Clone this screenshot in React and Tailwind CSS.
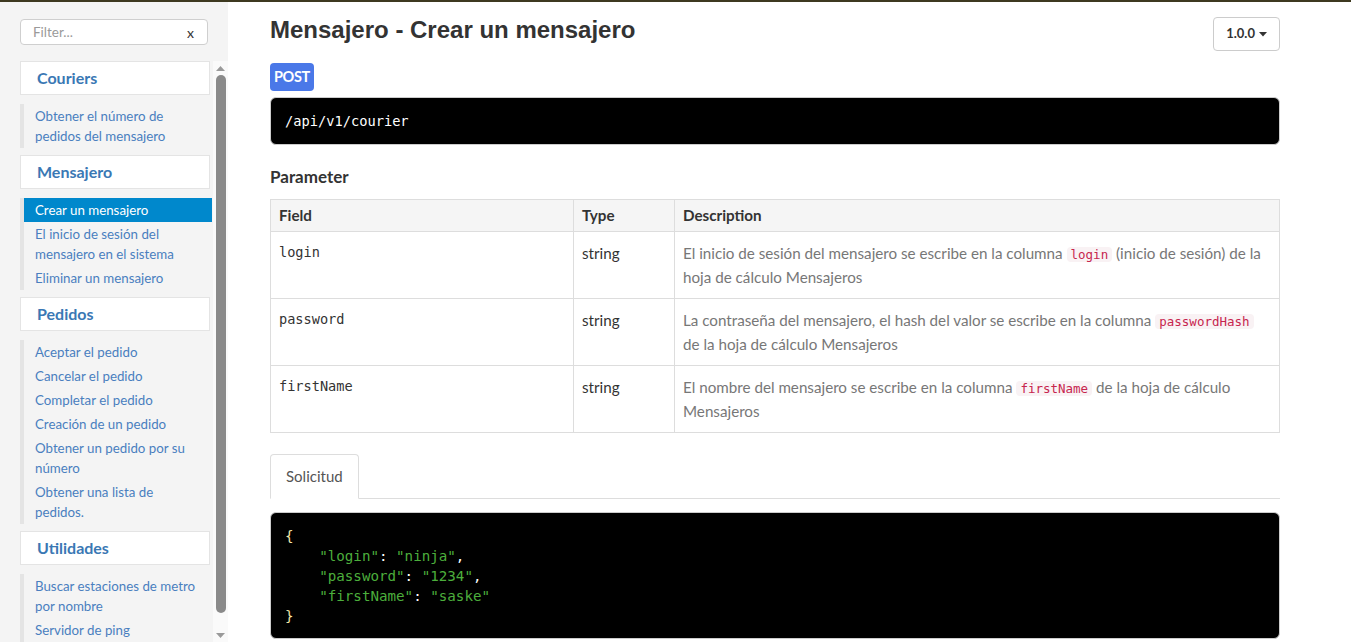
const groups = [
  { title: "Couriers", items: [["Obtener el número de", "pedidos del mensajero"]] },
  {
    title: "Mensajero",
    items: [
      ["Crear un mensajero"],
      ["El inicio de sesión del", "mensajero en el sistema"],
      ["Eliminar un mensajero"],
    ],
    active: 0,
  },
  {
    title: "Pedidos",
    items: [
      ["Aceptar el pedido"],
      ["Cancelar el pedido"],
      ["Completar el pedido"],
      ["Creación de un pedido"],
      ["Obtener un pedido por su", "número"],
      ["Obtener una lista de", "pedidos."],
    ],
  },
  {
    title: "Utilidades",
    items: [["Buscar estaciones de metro", "por nombre"], ["Servidor de ping"]],
  },
];

const params = [
  {
    field: "login",
    desc: (
      <>
        El inicio de sesión del mensajero se escribe en la columna <Code>login</Code> (inicio de sesión) de la hoja de
        cálculo Mensajeros
      </>
    ),
  },
  {
    field: "password",
    desc: (
      <>
        La contraseña del mensajero, el hash del valor se escribe en la columna <Code>passwordHash</Code> de la hoja de
        cálculo Mensajeros
      </>
    ),
  },
  {
    field: "firstName",
    desc: (
      <>
        El nombre del mensajero se escribe en la columna <Code>firstName</Code> de la hoja de cálculo Mensajeros
      </>
    ),
  },
];

function Code({ children }) {
  return (
    <code className="font-['DejaVu_Sans_Mono',monospace] text-[12.5px] text-[#c7254e] bg-[#f9f2f4] rounded px-1">
      {children}
    </code>
  );
}

function Sidebar() {
  return (
    <div className="w-[228px] shrink-0 bg-[#f4f4f4] h-full flex flex-col">
      <div className="pl-5 pr-5 pt-[17px] pb-[16px]">
        <div className="h-[26px] bg-white border border-[#cfcfcf] rounded-[4px] flex items-center justify-between pl-3 pr-[13px]">
          <span className="text-[13.5px] text-[#9a9a9a]">Filter...</span>
          <span className="text-[14px] text-[#333]">x</span>
        </div>
      </div>
      <div className="flex flex-1 min-h-0">
        <nav className="w-[213px] pl-5 pr-[1px] overflow-hidden">
          {groups.map((g) => (
            <div key={g.title} className="mb-[7px]">
              <div className="h-[34px] mr-[2px] bg-white border border-[#e4e4e4] flex items-center pl-4 text-[16px] font-bold text-[#3a78b4]">
                {g.title}
              </div>
              <ul className="mt-[9px] border-l-4 border-[#e4e4e4]">
                {g.items.map((lines, i) => (
                  <li
                    key={i}
                    className={
                      g.active === i
                        ? "bg-[#0088cc] text-white pl-[11px] py-[2px] text-[13.3px] leading-[20px]"
                        : "text-[#4a7fbf] pl-[11px] py-[2px] text-[13.3px] leading-[20px]"
                    }
                  >
                    {lines.map((l) => (
                      <div key={l} className="whitespace-nowrap">{l}</div>
                    ))}
                  </li>
                ))}
              </ul>
            </div>
          ))}
        </nav>
        <div className="w-[15px] bg-[#fafafa] flex flex-col items-center">
          <svg width="9" height="6" viewBox="0 0 9 6" className="mt-[5px]">
            <path d="M0 5 L4.5 0 L9 5 Z" fill="#9a9a9a" />
          </svg>
          <div className="w-[10px] flex-1 bg-[#8a8a8a] rounded-full mt-[3px] mb-[20px]" />
          <svg width="9" height="6" viewBox="0 0 9 6" className="mb-[3px]">
            <path d="M0 0 L9 0 L4.5 5 Z" fill="#9a9a9a" />
          </svg>
        </div>
      </div>
    </div>
  );
}

export default function App() {
  return (
    <div className="h-[642px] overflow-hidden flex flex-col font-['Lato',sans-serif] bg-white">
      <div className="h-[2px] bg-[#3d3920] shrink-0" />
      <div className="flex flex-1 min-h-0">
        <Sidebar />
        <main className="flex-1 pl-[42px] pr-[71px] pt-[13px]">
          <div className="flex justify-between items-start">
            <h1 className="font-['Liberation_Sans',sans-serif] font-bold text-[24px] text-[#333] leading-[30px]">
              Mensajero - Crear un mensajero
            </h1>
            <button className="mt-[2px] h-[34px] px-[12px] border border-[#ccc] rounded-[4px] text-[13px] font-bold text-[#333] flex items-center gap-1">
              1.0.0
              <svg width="8" height="5" viewBox="0 0 8 5">
                <path d="M0 0 L8 0 L4 4.5 Z" fill="#333" />
              </svg>
            </button>
          </div>
          <div className="mt-[12px] flex">
            <span className="flex items-center h-[28px] px-[4px] bg-[#4a78e8] rounded-[4px] text-white font-bold text-[14.5px] tracking-tight">
              POST
            </span>
          </div>
          <div className="mt-[6px] h-[48px] bg-black rounded-[6px] border border-[#ccc] flex items-center px-[14px]">
            <span className="font-['DejaVu_Sans_Mono',monospace] text-[13.7px] text-white">/api/v1/courier</span>
          </div>
          <h2 className="mt-[20px] text-[17px] font-bold text-[#333] leading-[24px]">Parameter</h2>
          <table className="mt-[10px] w-full border-collapse text-[15.2px]">
            <thead>
              <tr className="bg-[#f5f5f5]">
                <th className="w-[303px] border border-[#ddd] text-left font-bold text-[#333] px-2 h-[32px]">Field</th>
                <th className="w-[101px] border border-[#ddd] text-left font-bold text-[#333] px-2">Type</th>
                <th className="border border-[#ddd] text-left font-bold text-[#333] px-2">Description</th>
              </tr>
            </thead>
            <tbody>
              {params.map((p) => (
                <tr key={p.field} className="h-[67px]">
                  <td className="border border-[#ddd] align-top px-2 pt-[10px] font-['DejaVu_Sans_Mono',monospace] text-[13.6px] text-[#333]">
                    {p.field}
                  </td>
                  <td className="border border-[#ddd] align-top px-2 pt-[10px] text-[#333] leading-[23px]">string</td>
                  <td className="border border-[#ddd] align-top px-2 pt-[10px] pb-2 text-[#777] leading-[23px]">
                    {p.desc}
                  </td>
                </tr>
              ))}
            </tbody>
          </table>
          <div className="mt-[21px] border-b border-[#ddd] flex">
            <div className="h-[45px] px-[15px] border border-[#ddd] border-b-white -mb-px rounded-t-[4px] bg-white flex items-center text-[15px] text-[#555]">
              Solicitud
            </div>
          </div>
          <pre className="mt-[13px] bg-black rounded-[6px] border border-[#ccc] px-[14px] pt-[13px] pb-[12px] font-['DejaVu_Sans_Mono',monospace] text-[14.2px] leading-[20px] text-white">
            <span className="text-[#f3e7a9]">{"{"}</span>
            {"\n    "}
            <span className="text-[#4cae3c]">"login"</span>: <span className="text-[#4cae3c]">"ninja"</span>,
            {"\n    "}
            <span className="text-[#4cae3c]">"password"</span>: <span className="text-[#4cae3c]">"1234"</span>,
            {"\n    "}
            <span className="text-[#4cae3c]">"firstName"</span>: <span className="text-[#4cae3c]">"saske"</span>
            {"\n"}
            <span className="text-[#f3e7a9]">{"}"}</span>
          </pre>
        </main>
      </div>
    </div>
  );
}
